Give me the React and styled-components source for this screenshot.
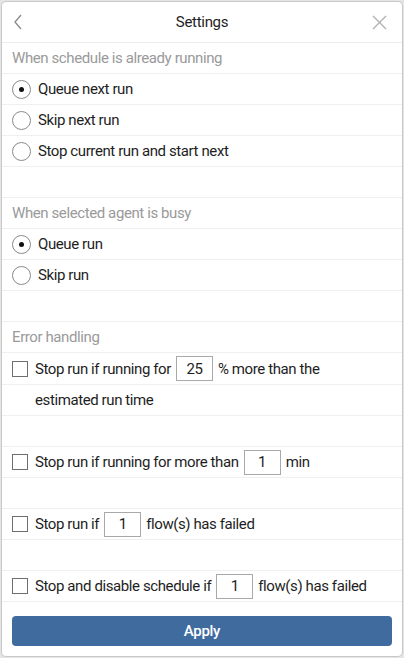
import React, { useState } from 'react';
import styled, { createGlobalStyle } from 'styled-components';

const GlobalStyle = createGlobalStyle`
  html, body {
    margin: 0;
    padding: 0;
    background: #e4e4e4;
  }
  * {
    box-sizing: border-box;
  }
`;

const Panel = styled.div`
  width: 402px;
  height: 656px;
  margin: 1px;
  background: #fff;
  border: 1px solid #c9c9c9;
  border-radius: 5px;
  display: flex;
  flex-direction: column;
  overflow: hidden;
  font-family: 'Roboto', 'Liberation Sans', sans-serif;
  color: #1e1e1e;
`;

const Header = styled.div`
  height: 41px;
  flex-shrink: 0;
  display: grid;
  grid-template-columns: 40px 1fr 40px;
  align-items: center;
  border-bottom: 1px solid #ececec;
`;

const Title = styled.div`
  text-align: center;
  font-size: 15px;
  letter-spacing: -0.3px;
`;

const IconButton = styled.button`
  border: 0;
  background: none;
  padding: 0;
  height: 40px;
  display: flex;
  align-items: center;
  justify-content: ${(p) => (p.$right ? 'flex-end' : 'flex-start')};
  padding-left: ${(p) => (p.$right ? '0' : '11px')};
  padding-right: ${(p) => (p.$right ? '15px' : '0')};
  cursor: pointer;
`;

const Body = styled.div`
  flex: 1;
  display: flex;
  flex-direction: column;
`;

const Row = styled.div`
  height: ${(p) => (p.$tall ? 32 : 31)}px;
  flex-shrink: 0;
  display: flex;
  align-items: center;
  border-bottom: 1px solid #efefef;
  font-size: 15px;
  letter-spacing: -0.4px;
  white-space: nowrap;
  color: ${(p) => (p.$muted ? '#9a9a9a' : '#1e1e1e')};
  padding: 0 10px 0 ${(p) => (p.$indent ? '33px' : '10px')};
`;

const RadioCircle = styled.span`
  width: 19px;
  height: 19px;
  margin-right: 7px;
  border-radius: 50%;
  border: 1px solid #8a8a8a;
  display: flex;
  align-items: center;
  justify-content: center;
  flex-shrink: 0;
  &::after {
    content: '';
    width: 5px;
    height: 5px;
    border-radius: 50%;
    background: #111;
    display: ${(p) => (p.$on ? 'block' : 'none')};
  }
`;

const Check = styled.span`
  width: 16px;
  height: 16px;
  border: 1px solid #6e6e6e;
  flex-shrink: 0;
  margin-right: 7px;
`;

const NumBox = styled.span`
  width: ${(p) => p.$w || 37}px;
  height: 25px;
  margin: 0 5px;
  border: 1px solid #a9a9a9;
  display: inline-flex;
  align-items: center;
  justify-content: center;
  font-size: 15px;
  flex-shrink: 0;
`;

const Footer = styled.div`
  padding: 11px 10px 10px;
  margin-top: auto;
`;

const ApplyButton = styled.button`
  width: 100%;
  height: 30px;
  border: 0;
  border-radius: 4px;
  background: #3f6b9f;
  color: #fff;
  font-family: 'Roboto', 'Liberation Sans', sans-serif;
  font-size: 15px;
  font-weight: 500;
  letter-spacing: -0.3px;
`;

const radioGroups = [
  {
    title: 'When schedule is already running',
    options: ['Queue next run', 'Skip next run', 'Stop current run and start next'],
  },
  {
    title: 'When selected agent is busy',
    options: ['Queue run', 'Skip run'],
  },
];

function Radio({ on, label }) {
  return (
    <Row>
      <RadioCircle $on={on} />
      {label}
    </Row>
  );
}

export default function App() {
  const [picked] = useState([0, 0]);
  return (
    <>
      <GlobalStyle />
      <Panel>
        <Header>
          <IconButton aria-label="Back">
            <svg width="10" height="16" viewBox="0 0 10 16">
              <path d="M8 1 L2 8 L8 15" fill="none" stroke="#8a8a8a" strokeWidth="1.3" />
            </svg>
          </IconButton>
          <Title>Settings</Title>
          <IconButton $right aria-label="Close">
            <svg width="15" height="15" viewBox="0 0 15 15">
              <path d="M1 1 L14 14 M14 1 L1 14" fill="none" stroke="#b0b0b0" strokeWidth="1.3" />
            </svg>
          </IconButton>
        </Header>
        <Body>
          {radioGroups.map((g, gi) => (
            <React.Fragment key={g.title}>
              <Row $muted>{g.title}</Row>
              {g.options.map((o, oi) => (
                <Radio key={o} on={picked[gi] === oi} label={o} />
              ))}
              <Row />
            </React.Fragment>
          ))}
          <Row $muted>Error handling</Row>
          <Row $tall>
            <Check />
            Stop run if running for<NumBox>25</NumBox>% more than the
          </Row>
          <Row $indent>estimated run time</Row>
          <Row />
          <Row>
            <Check />
            Stop run if running for more than<NumBox>1</NumBox>min
          </Row>
          <Row />
          <Row>
            <Check />
            Stop run if<NumBox>1</NumBox>flow(s) has failed
          </Row>
          <Row />
          <Row>
            <Check />
            Stop and disable schedule if<NumBox>1</NumBox>flow(s) has failed
          </Row>
        </Body>
        <Footer>
          <ApplyButton>Apply</ApplyButton>
        </Footer>
      </Panel>
    </>
  );
}
